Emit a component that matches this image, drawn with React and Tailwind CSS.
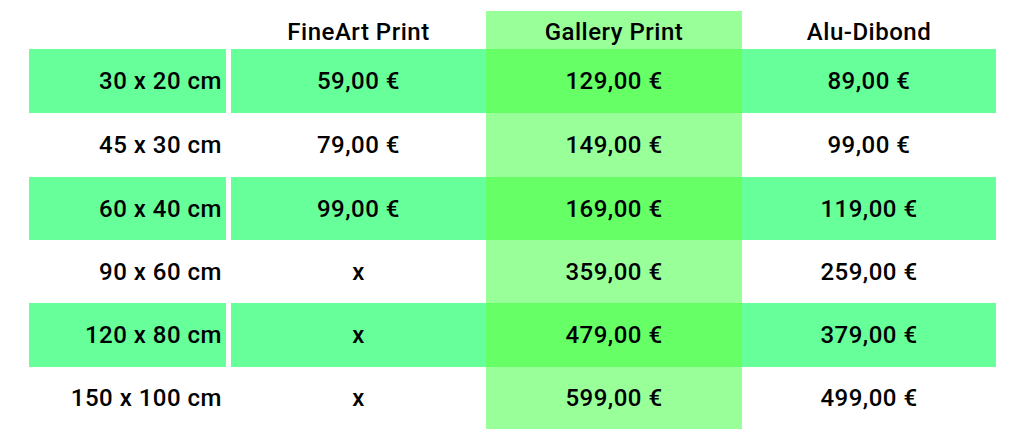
const rows = [
  { size: '30 x 20 cm', prices: ['59,00 €', '129,00 €', '89,00 €'], band: true, h: 'h-[64px]' },
  { size: '45 x 30 cm', prices: ['79,00 €', '149,00 €', '99,00 €'], band: false, h: 'h-[64px]' },
  { size: '60 x 40 cm', prices: ['99,00 €', '169,00 €', '119,00 €'], band: true, h: 'h-[63px]' },
  { size: '90 x 60 cm', prices: ['x', '359,00 €', '259,00 €'], band: false, h: 'h-[63px]' },
  { size: '120 x 80 cm', prices: ['x', '479,00 €', '379,00 €'], band: true, h: 'h-[64px]' },
  { size: '150 x 100 cm', prices: ['x', '599,00 €', '499,00 €'], band: false, h: 'h-[62px]' },
]

const headers = ['FineArt Print', 'Gallery Print', 'Alu-Dibond']

function cellColor(band, gallery) {
  if (gallery) return band ? 'bg-[#66ff66]' : 'bg-[#99ff99]'
  return band ? 'bg-[#66ff99]' : 'bg-white'
}

export default function App() {
  return (
    <div
      className="h-[440px] w-[1024px] overflow-hidden bg-white pl-[29px] pt-[11px] text-[24px] font-medium tracking-[0.5px] text-black"
      style={{ fontFamily: 'Roboto, "Liberation Sans", sans-serif' }}
    >
      <div className="grid grid-cols-[202px_255px_256px_254px]">
        {/* header */}
        <div className="h-[38px]" />
        {headers.map((h, i) => (
          <div
            key={h}
            className={`flex h-[38px] items-center justify-center pt-[3px] ${i === 1 ? 'bg-[#99ff99]' : ''}`}
          >
            {h}
          </div>
        ))}

        {rows.map((r) => (
          <div key={r.size} className="contents">
            <div className={`${r.h} pr-[5px]`}>
              <div
                className={`flex h-full items-center justify-end pr-[4px] ${r.band ? 'bg-[#66ff99]' : ''}`}
              >
                {r.size}
              </div>
            </div>
            {r.prices.map((p, i) => (
              <div
                key={i}
                className={`flex ${r.h} items-center justify-center ${cellColor(r.band, i === 1)}`}
              >
                {p}
              </div>
            ))}
          </div>
        ))}
      </div>
    </div>
  )
}
